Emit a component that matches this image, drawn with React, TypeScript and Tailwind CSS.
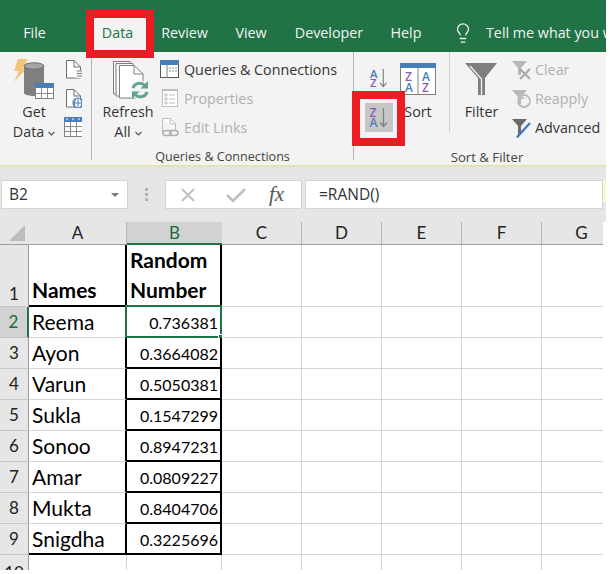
import React from "react";
import { Lightbulb } from "lucide-react";

const Chevron = () => (
  <svg width="7" height="5" viewBox="0 0 7 5" className="ml-[4px] mt-[2px]">
    <path d="M0.5 1 L3.5 4 L6.5 1" fill="none" stroke="#555" strokeWidth="1.1" />
  </svg>
);

const GetDataIcon = () => (
  <svg width="44" height="44" viewBox="12 57 44 44">
    <polygon points="18,59 28,59 23,68 27,68 14,82 19,71 14,71" fill="#f2c678" />
    <rect x="24" y="66" width="20" height="27" fill="#7f7f7f" />
    <ellipse cx="34" cy="93" rx="10" ry="3" fill="#7f7f7f" />
    <ellipse cx="34" cy="66" rx="10" ry="3.2" fill="#a6a6a6" stroke="#6e6e6e" strokeWidth="1" />
    <rect x="35.5" y="83.5" width="18" height="15" fill="#fff" stroke="#7f7f7f" />
    <rect x="35" y="83" width="19" height="5" fill="#4a7ebb" />
    <path d="M35 93.5H54M41.5 88V99M47.5 88V99" stroke="#8c8c8c" strokeWidth="1" />
  </svg>
);

const DocIcon = () => (
  <svg width="18" height="20" viewBox="64 59 18 20">
    <path d="M66.5 60.5H74L80.5 67V78H66.5Z" fill="#fff" stroke="#6e6e6e" />
    <path d="M74 60.5V67H80.5" fill="none" stroke="#6e6e6e" />
    <rect x="76" y="70" width="6" height="8" fill="#f3f3f3" />
    <path d="M77 71H82M77 73.5H82M77 76H82" stroke="#7f7f7f" />
  </svg>
);

const WebDocIcon = () => (
  <svg width="18" height="20" viewBox="64 88 18 20">
    <path d="M66.5 89.5H74L80.5 96V107H66.5Z" fill="#fff" stroke="#6e6e6e" />
    <path d="M74 89.5V96H80.5" fill="none" stroke="#6e6e6e" />
    <circle cx="78" cy="103" r="5" fill="#fff" stroke="#4a7ebb" strokeWidth="1.2" />
    <path d="M73 103H83M78 98V108M75.5 99C74 102 74 105 75.5 107M80.5 99C82 102 82 105 80.5 107" fill="none" stroke="#4a7ebb" />
  </svg>
);

const TableIcon = () => (
  <svg width="18" height="20" viewBox="64 117 18 20">
    <rect x="64.5" y="117.5" width="20" height="19" fill="#fff" stroke="#7f7f7f" />
    <rect x="64" y="117" width="20" height="5" fill="#4a7ebb" />
    <path d="M66 118.5h2l-1 2zM72 118.5h2l-1 2zM78 118.5h2l-1 2z" fill="#fff" />
    <path d="M64 126.5H84M64 131.5H84M70.5 122V137M76.5 122V137" stroke="#8c8c8c" />
  </svg>
);

const RefreshIcon = () => (
  <svg width="38" height="40" viewBox="112 60 38 40">
    <path d="M113.5 61.5H130V94H113.5Z" fill="#f3f3f3" stroke="#7f7f7f" />
    <path d="M116 63.5H133V96H116Z" fill="#f8f8f8" stroke="#7f7f7f" />
    <path d="M119.5 65.5H134L143 74V98H119.5Z" fill="#fff" stroke="#7f7f7f" />
    <path d="M134 65.5V74H143" fill="none" stroke="#7f7f7f" />
    <circle cx="140" cy="90" r="9.5" fill="#f3f3f3" />
    <path d="M133 88C134.5 83 141 81.5 145 85.5" fill="none" stroke="#62a58b" strokeWidth="3" />
    <path d="M148 81V88.5H140.5Z" fill="#62a58b" />
    <path d="M147 92C145.5 97 139 98.5 135 94.5" fill="none" stroke="#62a58b" strokeWidth="3" />
    <path d="M132 99V91.5H139.5Z" fill="#62a58b" />
  </svg>
);

const QueriesIcon = () => (
  <svg width="19" height="19" viewBox="160 60 19 19" className="shrink-0">
    <rect x="160.5" y="60.5" width="18" height="17" fill="#fff" stroke="#555" />
    <rect x="160" y="60" width="19" height="5" fill="#4a7ebb" />
    <path d="M167 65V78" stroke="#7f7f7f" />
    <path d="M169 68h2M172 68h2M175 68h2M169 71h2M172 71h2M175 71h2" stroke="#8c8c8c" />
  </svg>
);

const PropertiesIcon = () => (
  <svg width="19" height="19" viewBox="160 89 19 19" className="shrink-0">
    <rect x="162.5" y="89.5" width="15" height="17" fill="#fff" stroke="#bdbdbd" />
    <rect x="162" y="89" width="16" height="2" fill="#bdbdbd" />
    <path d="M169 95H175M169 99H175M169 103H175" stroke="#bdbdbd" />
    <circle cx="166" cy="95" r="1.2" fill="none" stroke="#bdbdbd" />
    <circle cx="166" cy="99" r="1.2" fill="none" stroke="#bdbdbd" />
    <circle cx="166" cy="103" r="1.2" fill="none" stroke="#bdbdbd" />
  </svg>
);

const EditLinksIcon = () => (
  <svg width="19" height="19" viewBox="160 118 19 19" className="shrink-0">
    <path d="M162.5 118.5H170L175.5 124V130M162.5 118.5V133" fill="#fff" stroke="#bdbdbd" />
    <path d="M170 118.5V124H175.5" fill="none" stroke="#bdbdbd" />
    <rect x="163" y="130.5" width="8" height="5" rx="2.5" fill="none" stroke="#b0b0b0" strokeWidth="1.6" />
    <rect x="170" y="130.5" width="8" height="5" rx="2.5" fill="none" stroke="#b0b0b0" strokeWidth="1.6" />
  </svg>
);

const sortFont = { fontFamily: "'Open Sans', sans-serif", fontWeight: 600, fontSize: 12 };

const AZIcon = ({ flip }: { flip?: boolean }) => (
  <svg width="20" height="21" viewBox="0 0 20 21">
    <text x="0.5" y="10" fill={flip ? "#8e5bb5" : "#4a7ebb"} style={sortFont}>{flip ? "Z" : "A"}</text>
    <text x="0.5" y="20" fill={flip ? "#4a7ebb" : "#8e5bb5"} style={sortFont}>{flip ? "A" : "Z"}</text>
    <path d="M14.5 1V19M11 15.5L14.5 19.5L18 15.5" fill="none" stroke="#7f7f7f" strokeWidth="1.2" />
  </svg>
);

const SortIcon = () => (
  <svg width="36" height="32" viewBox="0 0 36 32" className="shrink-0">
    <rect x="0.5" y="0.5" width="35" height="31" fill="#fff" stroke="#7f7f7f" />
    <rect x="0" y="0" width="36" height="5" fill="#4a7ebb" />
    <path d="M18 5V32" stroke="#7f7f7f" />
    <text x="5" y="18" fill="#8e5bb5" style={sortFont}>Z</text>
    <text x="5" y="29" fill="#4a7ebb" style={sortFont}>A</text>
    <text x="22" y="18" fill="#4a7ebb" style={sortFont}>A</text>
    <text x="22" y="29" fill="#8e5bb5" style={sortFont}>Z</text>
  </svg>
);

const FunnelIcon = () => (
  <svg width="33" height="33" viewBox="465 63 33 33" className="shrink-0">
    <polygon points="465,63 497,63 485,78 485,95 478,95 478,78" fill="#7f7f7f" />
    <path d="M470 66L481.5 79V95" fill="none" stroke="#f3f3f3" strokeWidth="1.3" />
  </svg>
);

const ClearIcon = () => (
  <svg width="20" height="20" viewBox="512 59 20 20" className="shrink-0">
    <polygon points="512,60 527,60 521,67 521,74 518,74 518,67" fill="#b8b8b8" />
    <path d="M520 68L530 78M530 68L520 78" stroke="#a8a8a8" strokeWidth="2" />
  </svg>
);

const ReapplyIcon = () => (
  <svg width="20" height="20" viewBox="512 88 20 20" className="shrink-0">
    <polygon points="512,89 527,89 521,96 521,103 518,103 518,96" fill="#b8b8b8" />
    <circle cx="524" cy="100" r="6" fill="none" stroke="#bcbcbc" strokeWidth="1.8" />
    <path d="M519 92V98H525" fill="#bcbcbc" />
  </svg>
);

const AdvancedIcon = () => (
  <svg width="20" height="20" viewBox="512 117 20 20" className="shrink-0">
    <polygon points="512,118 527,118 521,125 521,133 518,133 518,125" fill="#6a6a6a" />
    <path d="M530 122L519 134L517 136.5" fill="none" stroke="#3f7cc0" strokeWidth="2.4" />
  </svg>
);

function ListRow({ icon, label, off, gap = "ml-[5px]" }: { icon: React.ReactNode; label: string; off?: boolean; gap?: string }) {
  return (
    <div className="flex h-[29px] items-center">
      {icon}
      <span className={`${gap} text-[14.3px] whitespace-nowrap ${off ? "text-[#b1b1b1]" : "text-[#333]"}`}>{label}</span>
    </div>
  );
}

const tabs = [
  { label: "Review", w: "w-[77px]" },
  { label: "View", w: "w-[56px]" },
  { label: "Developer", w: "w-[100px]" },
  { label: "Help", w: "w-[54px]" },
];

const columns = ["A", "B", "C", "D", "E", "F", "G"];
const rows = [
  ["Reema", "0.736381"],
  ["Ayon", "0.3664082"],
  ["Varun", "0.5050381"],
  ["Sukla", "0.1547299"],
  ["Sonoo", "0.8947231"],
  ["Amar", "0.0809227"],
  ["Mukta", "0.8404706"],
  ["Snigdha", "0.3225696"],
];

const rowHead = "flex items-center justify-center border-r border-b bg-[#e6e6e6] text-[17px] text-[#222]";

export default function App() {
  return (
    <div className="relative h-[574px] w-[610px] overflow-hidden bg-white" style={{ fontFamily: "'Open Sans', sans-serif" }}>
      <div className="h-[570px] w-[606px] overflow-hidden">
        {/* Title tabs */}
        <div className="flex h-[52px] items-end overflow-hidden bg-[#217346] text-[14.3px] text-[#f2f2f2] whitespace-nowrap">
          <div className="flex h-[34px] w-[69px] shrink-0 items-center justify-center pb-[4px]">File</div>
          <div className="ml-[25px] flex h-[34px] w-[52px] shrink-0 items-center justify-center bg-[#f3f3f3] pb-[4px] pr-[5px] text-[#217346]">Data</div>
          {tabs.map((t) => (
            <div key={t.label} className={`flex h-[34px] ${t.w} shrink-0 items-center justify-center pb-[4px]`}>{t.label}</div>
          ))}
          <div className="ml-[19px] flex h-[34px] shrink-0 items-center pb-[4px]">
            <Lightbulb size={22} strokeWidth={1.4} color="#f2f2f2" />
            <span className="ml-[12px]">Tell me what you want</span>
          </div>
        </div>

        {/* Ribbon */}
        <div className="flex h-[113px] bg-[#f3f3f3] text-[14.3px] text-[#333]">
          <div className="mb-[5px] flex w-[92px] shrink-0 border-r border-[#b5b5b5]">
            <div className="ml-[12px] flex w-[44px] flex-col items-center">
              <div className="flex h-[50px] items-end pb-[1px]"><GetDataIcon /></div>
              <div className="h-[20px] leading-[20px]">Get</div>
              <div className="flex h-[20px] items-center leading-[20px]">Data<Chevron /></div>
            </div>
            <div className="ml-[8px] flex flex-col pt-[7px]">
              <div className="h-[29px]"><DocIcon /></div>
              <div className="h-[29px]"><WebDocIcon /></div>
              <div className="h-[20px]"><TableIcon /></div>
            </div>
          </div>

          <div className="flex w-[262px] shrink-0 flex-col">
            <div className="flex h-[108px] shrink-0 flex-col border-r border-[#b5b5b5]">
              <div className="flex h-[97px] shrink-0">
                <div className="ml-[10px] flex w-[52px] shrink-0 flex-col items-center">
                  <div className="flex h-[50px] items-end pl-[6px] pb-[2px]"><RefreshIcon /></div>
                  <div className="h-[20px] leading-[20px]">Refresh</div>
                  <div className="flex h-[20px] items-center leading-[20px]">All<Chevron /></div>
                </div>
                <div className="ml-[6px] flex flex-col pt-[3px]">
                  <ListRow icon={<QueriesIcon />} label="Queries & Connections" />
                  <ListRow icon={<PropertiesIcon />} label="Properties" off />
                  <ListRow icon={<EditLinksIcon />} label="Edit Links" off />
                </div>
              </div>
              <div className="h-[16px] shrink-0 text-center text-[12.6px] leading-[16px] text-[#444] whitespace-nowrap">Queries &amp; Connections</div>
            </div>
          </div>

          <div className="flex min-w-0 flex-1 flex-col">
            <div className="flex h-[97px] shrink-0">
              <div className="flex h-[80px] w-[96px] shrink-0 border-r border-[#d0d0d0]">
                <div className="ml-[10px] flex w-[30px] shrink-0 flex-col items-center pt-[16px]">
                  <AZIcon />
                  <div className="mt-[15px] flex h-[29px] w-[28px] shrink-0 items-center justify-center bg-[#c6c6c6]"><AZIcon flip /></div>
                </div>
                <div className="ml-[6px] flex flex-col items-center pt-[11px]">
                  <SortIcon />
                  <div className="mt-[7px] leading-[20px]">Sort</div>
                </div>
              </div>
              <div className="ml-[15px] flex w-[33px] shrink-0 flex-col items-center pt-[11px]">
                <FunnelIcon />
                <div className="mt-[6px] leading-[20px]">Filter</div>
              </div>
              <div className="ml-[14px] flex shrink-0 flex-col pt-[3px]">
                <ListRow icon={<ClearIcon />} label="Clear" off gap="ml-[3px]" />
                <ListRow icon={<ReapplyIcon />} label="Reapply" off gap="ml-[3px]" />
                <ListRow icon={<AdvancedIcon />} label="Advanced" gap="ml-[3px]" />
              </div>
            </div>
            <div className="h-[16px] w-[266px] shrink-0 text-center text-[13.2px] leading-[16px] text-[#444] whitespace-nowrap">Sort &amp; Filter</div>
          </div>
        </div>
        <div className="h-[2px] bg-[#e3e3b4]" />

        {/* Formula bar */}
        <div className="flex h-[55px] items-start bg-[#e6e6e6] pt-[13px] pl-[1px]">
          <div className="flex h-[29px] w-[127px] shrink-0 items-center justify-between border border-[#d4d4d4] bg-white pl-[7px] pr-[8px] text-[15.5px] text-[#333]">
            <span>B2</span>
            <svg width="8" height="4" viewBox="0 0 8 4"><polygon points="0,0 8,0 4,4" fill="#777" /></svg>
          </div>
          <div className="flex h-[29px] w-[37px] shrink-0 flex-col items-center justify-center gap-[2px]">
            <div className="h-[3px] w-[3px] bg-[#b5b5b5]" />
            <div className="h-[3px] w-[3px] bg-[#b5b5b5]" />
            <div className="h-[3px] w-[3px] bg-[#b5b5b5]" />
          </div>
          <div className="flex h-[29px] w-[137px] shrink-0 items-center border border-[#d4d4d4] bg-white text-[#bdbdbd]">
            <svg width="16" height="16" viewBox="0 0 16 16" className="ml-[14px]"><path d="M2 2L14 14M14 2L2 14" stroke="#bfbfbf" strokeWidth="1.8" /></svg>
            <svg width="22" height="16" viewBox="0 0 22 16" className="ml-[29px]"><path d="M2 8L8 14L20 2" fill="none" stroke="#bfbfbf" strokeWidth="2.6" /></svg>
            <span className="ml-[22px] text-[21px] italic leading-none text-[#555]" style={{ fontFamily: "'Liberation Serif', serif" }}>fx</span>
          </div>
          <div className="ml-[3px] flex h-[29px] w-[298px] shrink-0 items-center border border-[#d4d4d4] bg-white pl-[13px] text-[15.5px] text-[#333]">=RAND()</div>
          <div className="h-[22px] w-[3px] shrink-0 self-start bg-[#fdf9c8]" />
        </div>

        {/* Sheet */}
        <div
          className="grid w-[603px] overflow-hidden text-[#000]"
          style={{ gridTemplateColumns: "29px 98px 95px 80px 80px 80px 80px 80px", gridTemplateRows: "23px 62px repeat(8, 31px) 15px", fontFamily: "Lato, sans-serif" }}
        >
          <div className="flex items-end justify-end border-b border-[#9e9e9e] bg-[#e6e6e6] pr-[4px] pb-[3px]">
            <svg width="16" height="16" viewBox="0 0 16 16"><polygon points="16,0 16,16 0,16" fill="#bdbdbd" /></svg>
          </div>
          {columns.map((c) => (
            <div
              key={c}
              className={`flex items-center justify-center text-[17px] ${
                c === "B" ? "border-b-2 border-b-[#217346] bg-[#d2d2d2] text-[#1c6b41]" : "border-r border-b border-r-[#b5b5b5] border-b-[#9e9e9e] bg-[#e6e6e6] text-[#222]"
              }`}
            >
              {c}
            </div>
          ))}

          {/* row 1 */}
          <div className={`${rowHead} items-end border-r-[#9e9e9e] border-b-[#c8c8c8]`}>1</div>
          <div className="flex items-end border-r-2 border-b-2 border-black pl-[3px] text-[21px] font-bold leading-[30px]">Names</div>
          <div className="flex flex-col justify-end border-r-2 border-b-2 border-black pl-[3px] text-[21px] font-bold leading-[30px]">
            <span>Random</span>
            <span>Number</span>
          </div>
          {[0, 1, 2, 3, 4].map((i) => (
            <div key={i} className="border-r border-b border-[#d4d4d4]" />
          ))}

          {rows.map((r, i) => {
            const selected = i === 0;
            return (
              <React.Fragment key={r[0]}>
                <div
                  className={
                    selected
                      ? "flex items-center justify-center border-r-2 border-b border-r-[#217346] border-b-[#c8c8c8] bg-[#d2d2d2] text-[17px] text-[#1c6b41]"
                      : `${rowHead} border-r-[#9e9e9e] border-b-[#c8c8c8]`
                  }
                >
                  {i + 2}
                </div>
                <div className={`flex items-center border-r-2 border-black pl-[3px] text-[21px] ${i === rows.length - 1 ? "border-b-2" : "border-b border-b-[#d4d4d4]"}`}>{r[0]}</div>
                <div className="relative flex items-center justify-end border-r-2 border-b-2 border-black pr-[2px] pt-[2px] text-[16px]">
                  {r[1]}
                  {selected && (
                    <div className="absolute -top-[2px] -left-[2px] -right-[2px] -bottom-[2px] border-2 border-[#217346]">
                      <div className="absolute -right-[3px] -bottom-[3px] h-[5px] w-[5px] border border-white bg-[#217346]" />
                    </div>
                  )}
                </div>
                {[0, 1, 2, 3, 4].map((k) => (
                  <div key={k} className="border-r border-b border-[#d4d4d4]" />
                ))}
              </React.Fragment>
            );
          })}

          {/* row 10 */}
          <div className="flex h-[15px] items-start justify-center overflow-hidden border-r border-r-[#9e9e9e] bg-[#e6e6e6] pt-[6px] text-[17px] leading-[24px] text-[#222]">10</div>
          {[0, 1, 2, 3, 4, 5, 6].map((i) => (
            <div key={i} className="border-r border-[#d4d4d4]" />
          ))}
        </div>
      </div>

      {/* Red annotation boxes */}
      <div className="absolute left-[86px] top-[10px] h-[48px] w-[68px] border-8 border-[#ed1c24]" />
      <div className="absolute left-[352px] top-[91px] h-[55px] w-[53px] border-8 border-[#ed1c24]" />
    </div>
  );
}
